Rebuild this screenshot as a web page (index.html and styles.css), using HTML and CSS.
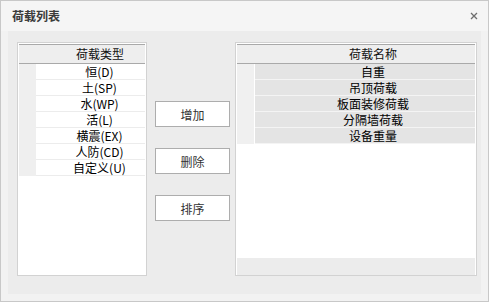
FILE: index.html
```html
<!DOCTYPE html>
<html lang="zh-CN">
<head>
    <meta charset="UTF-8">
    <meta name="viewport" content="width=device-width, initial-scale=1.0">
    <title>荷载列表</title>
    <link rel="stylesheet" href="styles.css">
</head>
<body>
    <div class="window">
        <div class="title-bar">
            <span class="title">荷载列表</span>
            <svg class="close" width="8" height="8" viewBox="0 0 8 8">
                <path d="M1 1 L7 7 M7 1 L1 7" stroke="#6e6e6e" stroke-width="1.3" fill="none"/>
            </svg>
        </div>
        <div class="content">
            <div class="list list-left">
                <div class="list-header">荷载类型</div>
                <div class="row"><span class="gutter"></span><span class="cell">恒(D)</span></div>
                <div class="row"><span class="gutter"></span><span class="cell">土(SP)</span></div>
                <div class="row"><span class="gutter"></span><span class="cell">水(WP)</span></div>
                <div class="row"><span class="gutter"></span><span class="cell">活(L)</span></div>
                <div class="row"><span class="gutter"></span><span class="cell">横震(EX)</span></div>
                <div class="row"><span class="gutter"></span><span class="cell">人防(CD)</span></div>
                <div class="row"><span class="gutter"></span><span class="cell">自定义(U)</span></div>
            </div>
            <div class="actions">
                <button class="btn">增加</button>
                <button class="btn">删除</button>
                <button class="btn">排序</button>
            </div>
            <div class="list list-right">
                <div class="list-header">荷载名称</div>
                <div class="rows">
                    <div class="row"><span class="gutter"></span><span class="cell">自重</span></div>
                    <div class="row"><span class="gutter"></span><span class="cell">吊顶荷载</span></div>
                    <div class="row"><span class="gutter"></span><span class="cell">板面装修荷载</span></div>
                    <div class="row"><span class="gutter"></span><span class="cell">分隔墙荷载</span></div>
                    <div class="row"><span class="gutter"></span><span class="cell">设备重量</span></div>
                </div>
                <div class="scroll-track"></div>
            </div>
        </div>
    </div>
</body>
</html>
```

FILE: styles.css
```css
body {
    margin: 0;
    background: #ffffff;
    font-family: "Noto Sans CJK SC", "Noto Sans", sans-serif;
    font-size: 12px;
}
.window {
    width: 489px;
    height: 302px;
    box-sizing: border-box;
    border: 1px solid #c8c8c8;
    background: #f2f2f2;
    display: flex;
    flex-direction: column;
}
.title-bar {
    height: 30px;
    background: #f5f5f5;
    display: flex;
    align-items: center;
    justify-content: space-between;
    padding: 0 10px 0 11px;
}
.title {
    font-size: 12px;
    font-weight: bold;
    color: #3a3a3a;
    margin-top: -2px;
}
.close {
    margin-top: -1px;
}
.content {
    flex: 1;
    margin: 0 7px 7px 7px;
    background: #ececec;
    display: flex;
    padding: 11px 4px 0 9px;
}
.list {
    box-sizing: border-box;
    height: 234px;
    border: 1px solid #d2d2d2;
    padding: 1px 1px 0 1px;
    background: #ffffff;
    display: flex;
    flex-direction: column;
}
.list-left {
    width: 130px;
}
.list-right {
    width: 242px;
}
.list-header {
    height: 18px;
    line-height: 18px;
    background: #eeeeee;
    border-top: 1px solid #a9a9a9;
    border-bottom: 1px solid #a9a9a9;
    color: #111;
    text-align: center;
}
.list-left .list-header {
    padding-left: 36px;
}
.list-right .list-header {
    padding-left: 34px;
}
.row {
    display: flex;
    height: 16px;
}
.gutter {
    width: 17px;
    background: #efefef;
    flex-shrink: 0;
}
.cell {
    flex: 1;
    line-height: 15px;
    border-bottom: 1px solid #ececec;
    text-align: center;
    color: #000;
}
.list-left .cell {
    padding-left: 18px;
}
.rows {
    flex: 1;
}
.list-right .gutter {
    width: 17px;
    border-right: 1px solid #ffffff;
    background: #f0f0f0;
}
.list-right .cell {
    background: #e4e4e4;
    border-bottom: 1px solid #f4f4f4;
    padding-left: 16px;
}
.scroll-track {
    height: 17px;
    background: #ececec;
}
.actions {
    width: 88px;
    box-sizing: border-box;
    padding: 59px 0 0 8px;
    display: flex;
    flex-direction: column;
    gap: 21px;
}
.btn {
    width: 75px;
    height: 26px;
    background: #ffffff;
    border: 1px solid #adadad;
    border-radius: 0;
    color: #333;
    font-family: "Noto Sans CJK SC", "Noto Sans", sans-serif;
    font-size: 12px;
    padding: 0;
}
```
